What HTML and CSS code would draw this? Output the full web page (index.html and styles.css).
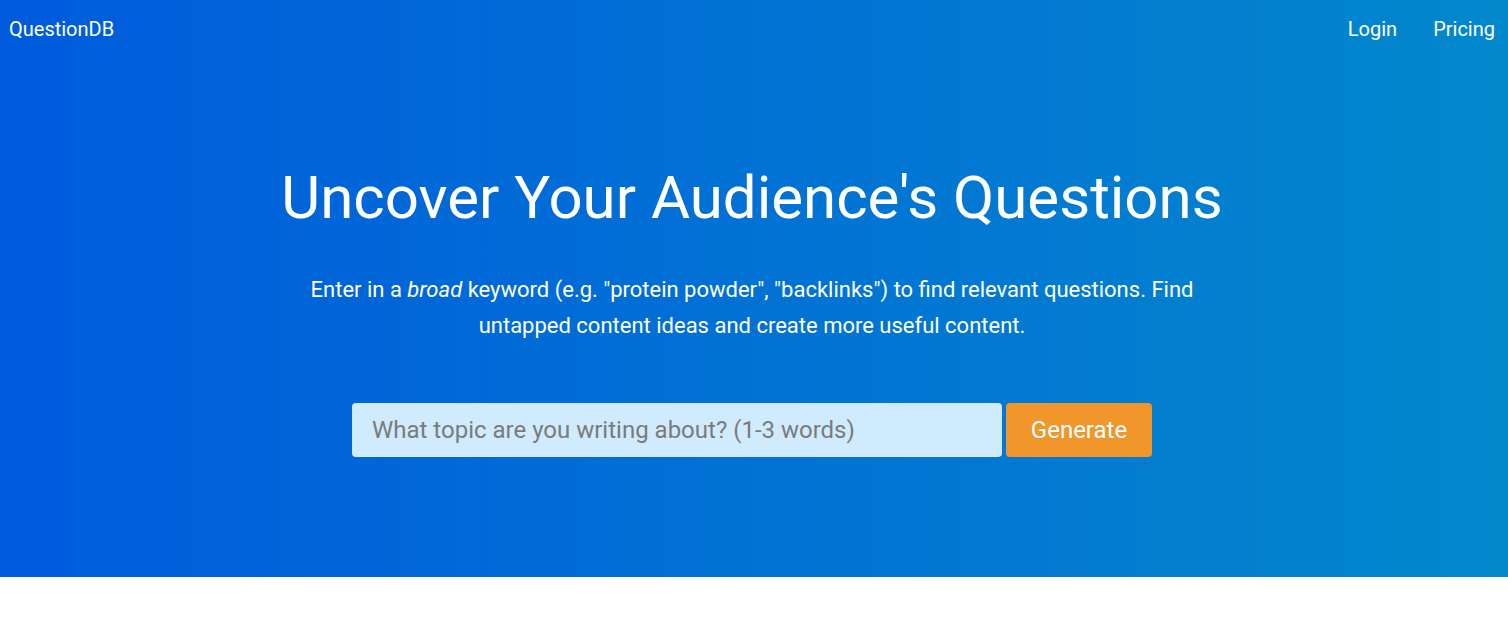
FILE: index.html
```html
<!DOCTYPE html>
<html lang="en">
<head>
    <meta charset="UTF-8">
    <meta name="viewport" content="width=device-width, initial-scale=1.0">
    <title>QuestionDB</title>
    <link rel="stylesheet" href="styles.css">
</head>
<body>
    <section class="hero">
        <nav class="nav">
            <a class="brand" href="#">QuestionDB</a>
            <div class="nav-links">
                <a href="#">Login</a>
                <a href="#">Pricing</a>
            </div>
        </nav>
        <div class="hero-body">
            <h1 class="title">Uncover Your Audience's Questions</h1>
            <p class="subtitle">Enter in a <em>broad</em> keyword (e.g. "protein powder", "backlinks") to find relevant questions. Find untapped content ideas and create more useful content.</p>
            <form class="search" onsubmit="return false;">
                <input class="search-input" type="text" placeholder="What topic are you writing about? (1-3 words)">
                <button class="search-button" type="submit">Generate</button>
            </form>
        </div>
    </section>
</body>
</html>
```

FILE: styles.css
```css
/* Page de base */
body {
    margin: 0;
    font-family: Roboto, "Liberation Sans", Arial, sans-serif;
    background: #fff;
}

/* Bandeau bleu */
.hero {
    height: 577px;
    background: linear-gradient(to right, #005bdd, #0388cc);
    color: #fff;
}

.nav {
    display: flex;
    justify-content: space-between;
    align-items: center;
    height: 58px;
    padding: 0 13px 0 9px;
}

.nav a {
    color: #fff;
    text-decoration: none;
    font-size: 20px;
}

.nav-links {
    display: flex;
    gap: 36px;
}

.hero-body {
    display: flex;
    flex-direction: column;
    align-items: center;
    padding-right: 4px;
    text-align: center;
}

.title {
    margin: 104px 0 0;
    font-size: 60px;
    font-weight: 400;
    line-height: 72px;
}

.subtitle {
    width: 900px;
    margin: 38px 0 0;
    font-size: 22px;
    line-height: 36px;
}

/* Barre de recherche */
.search {
    display: flex;
    gap: 4px;
    margin-top: 59px;
}

.search-input {
    width: 650px;
    height: 54px;
    box-sizing: border-box;
    padding: 0 20px;
    border: none;
    border-radius: 4px;
    background: #cfebfd;
    font-family: inherit;
    font-size: 24px;
    color: #333;
    outline: none;
}

.search-input::placeholder {
    color: #7b7b7b;
}

.search-button {
    width: 146px;
    height: 54px;
    border: none;
    border-radius: 4px;
    background: #f0962a;
    color: #fff;
    font-family: inherit;
    font-size: 24px;
    cursor: pointer;
}
```
